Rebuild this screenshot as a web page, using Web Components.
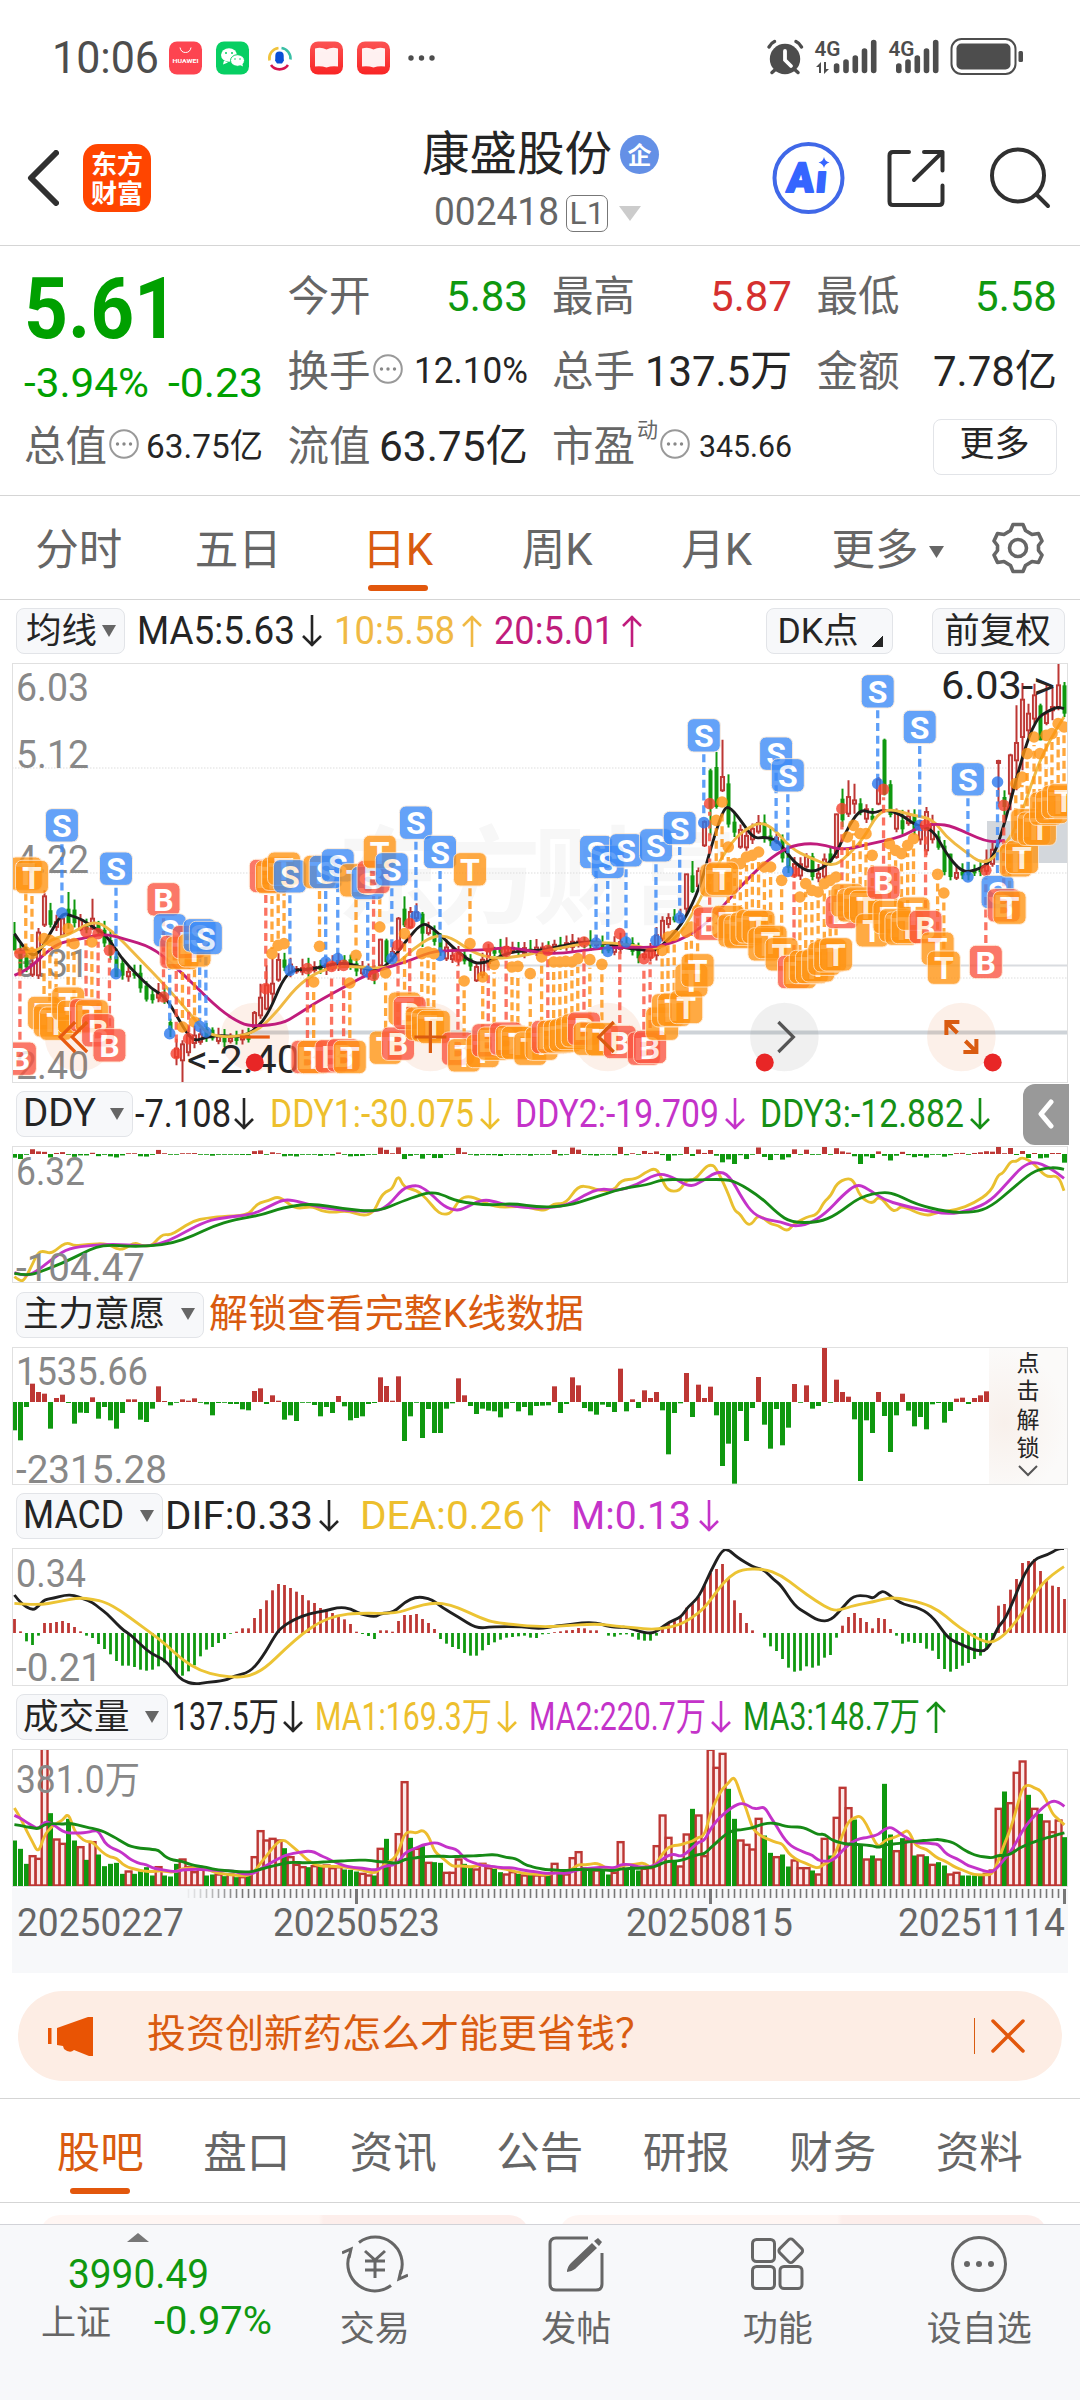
<!DOCTYPE html>
<html lang="zh-CN">
<head>
<meta charset="utf-8">
<title>康盛股份 002418</title>
<style>
  body {
    margin: 0;
    width: 1080px;
    height: 2400px;
    overflow: hidden;
    background: #fff;
    color: #252525;
    font-family: Roboto, "Noto Sans CJK SC", sans-serif;
    --up: #bd3734;
    --down: #0f980f;
    --brand: #d95b10;
    --gray: #666;
  }
</style>
</head>
<body>
<stock-app></stock-app>

<script>
const define = (name, css, html, ready) => {
    const tpl = document.createElement('template');
    tpl.innerHTML = `<style>*{box-sizing:border-box}:host{display:block;box-sizing:border-box}${css}</style>${html}`;
    customElements.define(name, class extends HTMLElement {
        connectedCallback() {
            if (this.shadowRoot) return;
            this.attachShadow({ mode: 'open' }).append(tpl.content.cloneNode(true));
            if (ready) ready.call(this, this.shadowRoot);
        }
    });
};

define('fit-text', `
    :host { display: inline-block; flex: none; white-space: nowrap; line-height: 1.2; }
    span { display: inline-block; transform-origin: 0 50%; }
`, `<span></span>`, function (root) {
    const span = root.querySelector('span');
    span.textContent = this.getAttribute('t');
    const w = Number(this.getAttribute('w'));
    this.style.width = w + 'px';
    span.style.transform = `scaleX(${w / span.getBoundingClientRect().width})`;
});

define('status-bar', `
    :host { height: 115px; padding: 36px 56px 0 52px; color: #4d4d4d; }
    .row { display: flex; align-items: center; height: 43px; }
    fit-text { font-size: 45px; margin-right: 10px; }
    svg { flex: none; }
    .right { margin-left: auto; }
`, `
    <div class="row">
        <fit-text t="10:06" w="107"></fit-text>
        <svg width="270" height="40" viewBox="169 37.5 270 40">
            <defs>
                <linearGradient id="r" x2="0" y2="1"><stop stop-color="#fb5252"/><stop offset="1" stop-color="#f92525"/></linearGradient>
            </defs>
            <rect x="169" y="41" width="33" height="33" rx="8" fill="#fd4450"/>
            <path d="M180 47q1 5 5.500 5t5.500-5" fill="none" stroke="#fff" stroke-width="1"/>
            <text x="172.500" y="62" font-size="6" font-weight="700" fill="#fff" textLength="26" lengthAdjust="spacingAndGlyphs">HUAWEI</text>
            <rect x="216" y="41" width="33" height="33" rx="8" fill="#07cf63"/>
            <ellipse cx="229" cy="54.500" rx="8" ry="6.800" fill="#fff"/><path d="M224 60l-1 4 5-2z" fill="#fff"/>
            <ellipse cx="237.500" cy="60" rx="7" ry="5.800" fill="#fff" stroke="#07cf63"/><path d="M239 64l4 2-1-4z" fill="#fff"/>
            <g fill="#07cf63"><circle cx="226" cy="52.500" r="1"/><circle cx="232" cy="52.500" r="1"/><circle cx="235" cy="58.500" r=".8"/><circle cx="240" cy="58.500" r=".8"/></g>
            <g fill="none" stroke-width="2.600">
                <path d="M269.500 60a10.500 10.500 0 0 1 9-12.500" stroke="#f0c33c"/>
                <path d="M281.500 47.500a10.500 10.500 0 0 1 9 11.500" stroke="#39bfa5"/>
                <path d="M271 64.500a10.500 10.500 0 0 0 17 0" stroke="#d5154f"/>
            </g>
            <path d="M279.500 51c6 0 3.500 6 4.500 9l-2 3h-5l-2-3c1-3-1.500-9 4.500-9z" fill="#0a4fd6"/>
            <g id="book">
                <rect x="310" y="41" width="33" height="33" rx="8" fill="url(#r)"/>
                <path d="M315 48q6-2 11.500 1q5.500-3 11.500-1v18q-6-1-11.500 1q-5.500-2-11.500-1z" fill="#fff" opacity=".93"/>
            </g>
            <use href="#book" x="47"/>
            <g fill="#4d4d4d"><circle cx="411" cy="57.500" r="2.700"/><circle cx="421.500" cy="57.500" r="2.700"/><circle cx="432" cy="57.500" r="2.700"/></g>
        </svg>
        <svg class="right" width="260" height="43" viewBox="764 36 260 43" fill="#4d4d4d">
            <circle cx="785" cy="59" r="15.200"/>
            <path d="M785 51v9l6 6" fill="none" stroke="#fff" stroke-width="3.800" stroke-linecap="round"/>
            <path d="M769 47q2-4 5.500-5.500M801.500 47q-2-4-5.500-5.500M776 69l-4 3.500M794 69l4 3.500" fill="none" stroke="#4d4d4d" stroke-width="3.500" stroke-linecap="round"/>
            <text x="814.500" y="56" font-size="21" font-weight="600" textLength="26" lengthAdjust="spacingAndGlyphs">4G</text>
            <path d="M836.600 66v4.500M846 62v8.500M855.300 58v12.500M864.500 51v19.500M873.700 42.500v28" stroke="#4d4d4d" stroke-width="5.600" stroke-linecap="round"/>
            <path d="M816 67l5-5v11h-2v-6zM829 69l-5 5v-12h2v7z"/>
            <text x="888.500" y="56" font-size="21" font-weight="600" textLength="26" lengthAdjust="spacingAndGlyphs">4G</text>
            <path d="M898.800 66v4.500M908 62v8.500M917.300 58v12.500M926.500 51v19.500M935.700 42.500v28" stroke="#4d4d4d" stroke-width="5.600" stroke-linecap="round"/>
            <rect x="951.500" y="39" width="64" height="35" rx="10" fill="none" stroke="#4d4d4d" stroke-width="2"/>
            <rect x="956.500" y="43.500" width="54" height="26" rx="5"/>
            <rect x="1018.500" y="51" width="4.500" height="11" rx="1.500"/>
        </svg>
    </div>
`);

define('app-header', `
    :host { height: 131px; display: flex; position: relative; border-bottom: 1.500px solid #d5d5d5; }
    .left { display: flex; align-items: center; padding: 0 0 4px 26px; gap: 24px; height: 130px; width: 422px; }
    .logo { width: 68px; height: 68px; border-radius: 15px; background: #ff4500; color: #fff; font: 700 26px/29px "Noto Sans CJK SC"; text-align: center; padding-top: 4px; }
    .mid { flex: 1; height: 130px; padding-top: 10px; }
    .name { display: flex; align-items: center; font-size: 47px; line-height: 58px; height: 58px; }
    .ent { width: 39px; height: 39px; border-radius: 50%; background: #6490e6; color: #fff; font: 700 24px/38px "Noto Sans CJK SC"; text-align: center; margin-left: 8px; }
    .code { display: flex; align-items: center; color: var(--gray); padding-left: 12px; height: 60px; font-size: 38px; }
    .lv { width: 42px; height: 37px; border: 1.500px solid #777; border-radius: 7px; font-size: 32px; line-height: 34px; text-align: center; margin: 0 11px 0 7px; }
    .right { display: flex; align-items: center; height: 130px; padding-bottom: 4px; width: 310px; }
`, `
    <div class="left">
        <svg width="33" height="56" viewBox="0 0 33 56"><path d="M30 3L5 28l25 25" fill="none" stroke="#303030" stroke-width="6" stroke-linejoin="round" stroke-linecap="round"/></svg>
        <div class="logo">东方<br>财富</div>
    </div>
    <div class="mid">
        <div class="name"><fit-text t="康盛股份" w="190"></fit-text><div class="ent">企</div></div>
        <div class="code"><fit-text t="002418" w="125"></fit-text><div class="lv">L1</div>
            <svg width="22" height="15"><path d="M0 0h22L11 15z" fill="#ccc"/></svg></div>
    </div>
    <div class="right">
        <svg width="310" height="76" viewBox="770 140 310 76" fill="none" stroke="#303030" stroke-width="4" stroke-linecap="round" stroke-linejoin="round">
            <circle cx="808.500" cy="178" r="34" stroke="#4068e8"/>
            <path d="M824 157q1 4.500 5.500 5.500q-4.500 1-5.500 5.500q-1-4.500-5.500-5.500q4.500-1 5.500-5.500z" fill="#3565ff" stroke="none"/>
            <text transform="translate(786 191.500) skewX(-5)" font-size="41" font-weight="900" fill="#3565ff" stroke="#3565ff" stroke-width="2"><tspan textLength="27" lengthAdjust="spacingAndGlyphs">A</tspan><tspan x="29" font-size="38">ı</tspan></text>
            <path d="M909 152h-16q-3.500 0-3.500 3.500v46q0 3.500 3.500 3.500h46q3.500 0 3.500-3.500v-16M924 152h18.500v18.500M942.500 152L914 180"/>
            <circle cx="1018" cy="175.500" r="26"/><path d="M1037 195l11 11"/>
        </svg>
    </div>
`);

define('info-dots', `:host{display:inline-block;flex:none;width:30px;height:30px}svg{display:block}`,
    `<svg width="30" height="30"><circle cx="15" cy="15" r="13.800" fill="none" stroke="#999" stroke-width="2"/><g fill="#888"><circle cx="8.500" cy="15" r="1.700"/><circle cx="15" cy="15" r="1.700"/><circle cx="21.500" cy="15" r="1.700"/></g></svg>`);

define('quote-cell', `
    :host { display: flex; align-items: center; height: 75px; }
    .label { font-size: 41.500px; color: var(--gray); white-space: nowrap; line-height: 50px; }
    fit-text { margin-left: auto; }
    slot { display: contents; }
`, `<span class="label"></span><slot></slot><fit-text></fit-text>`, function (root) {
    root.querySelector('.label').textContent = this.getAttribute('label');
    const fit = document.createElement('fit-text');
    fit.setAttribute('t', this.getAttribute('value'));
    fit.setAttribute('w', this.getAttribute('w'));
    fit.style.fontSize = (this.getAttribute('size') || 43) + 'px';
    fit.style.color = this.getAttribute('color') || '';
    root.querySelector('fit-text').replaceWith(fit);
});

define('quote-panel', `
    :host { height: 250px; border-bottom: 1.500px solid #d5d5d5; padding: 13px 24px 0 24px;
        display: grid; grid-template-columns: 239px 240px 240px 240px; grid-template-rows: 75px 75px 75px; column-gap: 24.500px; }
    .price { grid-row: span 2; color: #00a000; display: flex; flex-direction: column; }
    .big { font-size: 86px; font-weight: 700; height: 101px; line-height: 94px; margin-top: -2px; }
    .chg { display: flex; justify-content: space-between; font-size: 40px; height: 48px; line-height: 48px; margin-top: 2px; }
    .dyn { color: var(--gray); font-size: 21px; margin: -38px 0 0 2px; }
    info-dots { margin: -5px 0 0 2px; }
    .more { width: 124px; height: 56px; border: 1.500px solid #e2e4e8; border-radius: 8px; justify-self: end; align-self: center; font-size: 35px; line-height: 50px; text-align: center; }
`, `
    <div class="price">
        <div class="big"><fit-text t="5.61" w="154"></fit-text></div>
        <div class="chg"><fit-text t="-3.94%" w="125"></fit-text><fit-text t="-0.23" w="95"></fit-text></div>
    </div>
    <quote-cell label="今开" value="5.83" w="82" color="#0f980f"></quote-cell>
    <quote-cell label="最高" value="5.87" w="82" color="#d5302f"></quote-cell>
    <quote-cell label="最低" value="5.58" w="82" color="#0f980f"></quote-cell>
    <quote-cell label="换手" value="12.10%" w="114" size="36"><info-dots></info-dots></quote-cell>
    <quote-cell label="总手" value="137.5万" w="147"></quote-cell>
    <quote-cell label="金额" value="7.78亿" w="124"></quote-cell>
    <quote-cell label="总值" value="63.75亿" w="117" size="34"><info-dots></info-dots></quote-cell>
    <quote-cell label="流值" value="63.75亿" w="149"></quote-cell>
    <quote-cell label="市盈" value="345.66" w="93" size="31"><span class="dyn">动</span><info-dots></info-dots></quote-cell>
    <div class="more">更多</div>
`);

define('tab-item', `
    :host { display: flex; flex-direction: column; align-items: center; justify-content: center; position: relative; height: 100%; flex: none; color: var(--gray); font-size: 43.500px; white-space: nowrap; }
    :host([active]) { color: var(--brand); }
    :host([active])::after { content: ""; position: absolute; bottom: 8px; left: 50%; width: 60px; height: 6px; border-radius: 3px; margin-left: -30px; background: #e2570c; }
    span { margin-top: -3px; }
`, `<span><slot></slot></span>`);

define('period-tabs', `
    :host { display: flex; height: 104px; border-bottom: 1.500px solid #d5d5d5; align-items: center; margin-left: -1px; }
    tab-item { width: 159.500px; }
    .m { width: 182px; }
    .m svg { margin: 0 0 7px 10px; }
`, `
    <tab-item>分时</tab-item><tab-item>五日</tab-item><tab-item active>日K</tab-item><tab-item>周K</tab-item><tab-item>月K</tab-item>
    <tab-item class="m">更多<svg width="15" height="12"><path d="M0 0h15L7.500 12z" fill="#666"/></svg></tab-item>
    <svg width="54" height="54" viewBox="-27 -27 54 54" style="margin-left:12px" fill="none" stroke="#666" stroke-width="3.600" stroke-linejoin="round">
        <path d="M-5-23.500H5L7.500-17.500 14-13.500 20.500-14.500 24-7 20.500-2.500V2.500L24 7 20.500 14.500 14 13.500 7.500 17.500 5 23.500H-5L-7.500 17.500-14 13.500-20.500 14.500-24 7-20.500 2.500V-2.500L-24-7-20.500-14.500-14-13.500-7.500-17.500z"/><circle r="8.500"/>
    </svg>
`);

define('ind-button', `
    :host { display: flex; align-items: center; height: 46px; flex: none; background: #f7f8fa; border: 1.500px solid #e2e4e8; border-radius: 8px; padding: 0 8px 1px 6px; font-size: 35.500px; line-height: 42px; white-space: nowrap; }
    i { margin-left: auto; border: 7.500px solid transparent; border-top: 12px solid #666; border-bottom: 0; }
    :host([plain]) i { display: none; }
    :host([plain]) { justify-content: center; }
    :host([corner]) i { display: block; border: 0; background: linear-gradient(135deg, transparent 50%, #252525 51%); width: 12px; height: 12px; align-self: flex-end; margin: 0 -3px 5px 12px; }
`, `<slot></slot><i></i>`);

define('ind-value', `
    :host { display: flex; align-items: center; flex: none; font-size: 38.500px; }
    svg { flex: none; }
`, `<svg width="20" height="34" viewBox="0 0 20 34" fill="none" stroke="currentColor" stroke-width="2.600"><path/></svg>`, function (root) {
    const fit = document.createElement('fit-text');
    fit.setAttribute('t', this.getAttribute('t'));
    fit.setAttribute('w', this.getAttribute('w'));
    root.prepend(fit);
    root.querySelector('path').setAttribute('d', this.hasAttribute('up') ? 'M10 33V2M1 12l9-9 9 9' : 'M10 1v31M1 22l9 9 9-9');
    root.querySelector('svg').style.marginLeft = (this.getAttribute('gap') || 7) + 'px';
});

define('ind-row', `:host { display: flex; align-items: center; height: 63px; padding: 0 0 0 16px; }`, `<slot></slot>`);

/* ---- chart data ---- */
/* lines are traced on a grid 2.904 units per pixel across and 3 down, in two halves */
const HALF = 1568;
const trace = (left, right) => {
    const read = (s, dx) => s.split(' ').map(p => p.split(',').map(Number)).map(([x, y]) => [x + dx, y]);
    return [...read(left, 0), ...read(right, HALF)];
};
const px = x => (x - 35) / 2.904;
const barX = i => 2.500 + 6 * i;

const force = [-85,-115,-15,55,30,25,-80,12,22,-3,-65,-32,-33,14,-50,-15,-55,-80,-33,8,8,-53,-60,-20,47,3,-10,-2,8,4,11,-2,-7,-40,-3,-2,-6,-6,-22,-25,33,41,-6,20,4,-53,-40,-57,-1,-2,-9,-43,-15,-33,18,-13,-55,-48,-43,-6,-3,74,48,4,77,-117,-43,-2,-108,-21,-93,-93,-20,-4,71,20,-12,-36,-20,-26,-28,-46,-20,-3,-28,-15,-40,-12,
    -11,-10,47,-33,-6,74,50,-18,-28,-38,-8,-15,-30,100,-28,8,-18,35,12,30,-25,-157,-33,-4,87,-45,52,12,46,-40,-192,-125,-245,-27,-117,-18,75,-68,-140,-21,-130,-77,54,-2,50,-20,-12,163,-2,67,30,16,-52,-237,-55,-93,30,-42,-150,-40,25,-26,-73,-45,-82,-7,-3,-62,-27,10,13,-6,12,20,32];
const ddy = [...force.map(v => v > 0 ? Math.min(21, v * .26) : Math.max(-30, v * .13)), 7, 24, 2, 18, -3, 9, -12, 3, -13, -11, 3, 3, -26];
const macd = [42,5,-25,-36,-8,30,30,33,36,30,18,5,-8,-15,-33,-48,-64,-84,-98,-98,-102,-110,-113,-110,-100,-88,-98,-125,-128,-115,-97,-70,-50,-42,-30,-18,-2,4,14,14,45,72,98,128,147,144,135,124,114,98,90,75,66,60,50,41,27,4,-3,-9,-18,8,8,4,36,54,54,57,42,30,12,-18,-32,-42,-48,-60,-68,-68,-52,-36,-28,-20,-14,-12,-10,-8,-14,-15,
    -4,-2,2,5,8,9,15,14,8,8,0,-8,-11,-5,-4,-11,-20,-23,-23,-8,13,30,36,48,76,88,108,145,180,192,207,162,98,60,30,8,0,-14,-40,-54,-78,-104,-116,-113,-100,-104,-98,-74,-66,-14,22,48,60,45,33,14,45,42,12,-8,-32,-26,-30,-30,-47,-53,-78,-108,-116,-108,-98,-90,-78,-68,-50,-20,82,87,130,162,210,216,222,186,162,142,138,102];
/* positive = rising day (hollow red), negative = falling day (solid green) */
const volume = [-135,-110,-65,88,80,410,-217,138,125,-200,-135,115,-77,130,-93,-58,-65,-68,-35,42,-35,-43,-55,-30,55,-30,-27,-65,78,55,40,48,-30,-33,33,-28,33,-25,25,-33,85,163,135,140,135,-112,85,62,55,-55,58,-58,60,52,55,-48,-47,-42,35,30,-30,110,-140,62,154,310,-143,110,-118,68,-70,-68,38,38,78,-65,-58,48,65,52,-50,-40,33,40,-35,30,-33,30,
    30,-33,65,-35,33,82,100,-55,-50,45,-48,-33,38,130,-52,-60,-45,50,52,118,210,143,-75,57,153,-230,210,88,407,353,395,-290,-200,135,122,108,200,-150,-98,85,-93,-57,75,52,52,-45,33,140,-90,203,293,232,-198,-120,78,-90,78,-305,-153,103,-142,135,-90,90,-88,62,-70,-60,33,38,-30,-30,-30,-30,35,45,230,-282,247,338,372,-272,230,-215,192,160,195,-145];

const DIF = trace('42,345 60,370 95,392 112,378 130,358 155,355 190,345 215,346 240,355 270,368 290,385 310,400 340,432 360,452 380,465 410,495 440,522 480,540 510,580 530,602 565,613 600,607 655,602 680,588 725,577 760,535 800,465 815,445 850,420 900,400 945,393 985,381 1020,386 1040,400 1090,412 1105,400 1143,398 1175,366 1210,350 1245,355 1265,366 1285,383 1330,410 1385,446 1430,440 1520,440',
    '0,447 50,437 90,434 120,428 165,428 190,437 220,443 255,441 290,455 325,461 345,450 375,426 410,412 430,380 462,352 495,275 530,208 550,210 570,230 620,262 650,268 680,300 700,315 740,378 770,397 810,423 845,422 880,382 910,347 950,347 968,356 985,338 1000,333 1020,350 1055,374 1105,384 1145,415 1185,475 1220,492 1265,512 1300,513 1330,440 1350,420 1380,350 1405,285 1435,237 1475,224 1505,206 1522,206');
const DEA = trace('42,370 110,376 170,365 230,353 270,358 305,366 350,392 400,430 440,460 480,492 530,540 580,572 640,588 690,592 725,588 770,565 830,505 880,460 930,425 980,406 1040,399 1150,401 1200,382 1260,367 1310,375 1350,392 1410,420 1450,430',
    '0,441 60,438 165,431 220,438 290,445 335,449 400,437 440,415 480,382 520,325 550,290 585,268 650,266 700,285 750,325 800,362 850,392 880,388 910,377 970,365 1010,354 1040,354 1110,368 1160,392 1200,428 1240,458 1290,485 1315,487 1350,465 1390,415 1450,320 1490,282 1522,260');
const DDY1 = trace('42,590 60,605 72,598 90,562 110,518 125,513 145,520 160,513 180,495 198,488 215,498 255,493 310,490 340,508 360,507 392,487 410,497 440,498 460,475 475,463 495,465 520,450 560,423 600,414 640,410 720,406 740,380 755,368 780,362 805,350 825,360 860,388 905,378 930,392 965,398 1010,392 1055,408 1085,398 1105,352 1120,335 1140,327 1156,283 1173,323 1210,330 1240,357 1265,390 1285,404 1310,400 1335,357 1360,348 1390,358 1440,383 1520,378',
    '0,390 20,390 40,370 75,372 110,318 145,320 165,330 215,333 235,300 280,297 305,278 338,262 355,300 372,333 405,334 425,300 450,300 480,262 495,254 510,260 545,335 565,393 580,400 600,432 615,434 635,402 670,433 690,435 718,455 735,435 775,410 805,405 825,365 845,348 862,310 893,294 912,302 930,350 965,374 985,345 1020,390 1035,393 1050,376 1120,410 1160,395 1210,390 1260,370 1310,335 1330,285 1345,280 1367,243 1385,245 1400,230 1435,250 1470,293 1505,285 1522,332');
const DDY2 = trace('42,578 75,590 110,572 160,530 200,505 270,495 340,493 400,497 440,498 490,483 540,455 600,423 650,413 735,403 780,380 820,360 850,360 900,375 960,388 1090,397 1130,375 1170,325 1200,317 1220,318 1250,340 1290,380 1325,392 1350,385 1400,358 1440,365 1480,378',
    '0,386 80,376 130,345 175,325 225,333 280,315 340,280 380,288 435,322 470,305 515,273 550,285 590,360 620,402 660,420 700,425 735,440 780,432 830,400 880,345 920,312 950,325 1000,360 1050,375 1110,390 1185,403 1250,392 1310,362 1360,305 1400,260 1435,244 1480,262 1522,295');
const DDY3 = trace('42,580 85,588 130,570 180,550 240,520 280,500 320,495 375,499 440,498 500,490 560,468 620,438 680,419 760,405 820,383 905,370 1000,387 1095,396 1170,363 1220,345 1250,337 1280,342 1330,365 1420,376 1490,370',
    '0,382 80,378 150,355 240,325 310,315 360,297 440,301 530,297 570,305 640,350 690,400 730,428 810,427 860,405 930,350 1000,335 1040,345 1090,372 1180,396 1260,398 1310,380 1370,328 1430,275 1470,264 1500,263 1522,268');
const MA5 = trace('42,1030 75,1082 105,1100 140,1040 180,968 205,975 240,988 270,1010 310,1035 350,1100 400,1155 440,1195 480,1220 510,1270 540,1325 565,1353 600,1340 640,1335 700,1340 740,1320 780,1270 820,1170 850,1138 900,1138 990,1115 1050,1130 1090,1145 1130,1120 1180,1050 1225,998 1250,1008 1290,1045 1330,1085 1370,1115 1400,1120 1440,1105 1480,1085',
    '0,1080 60,1068 120,1055 160,1055 200,1062 260,1075 310,1080 340,1080 380,1040 420,990 465,890 500,760 530,665 547,645 580,685 620,745 650,740 690,748 740,820 790,850 850,815 890,720 930,655 965,670 1000,657 1050,672 1090,705 1140,715 1180,790 1220,840 1250,845 1310,820 1350,700 1400,500 1440,385 1480,360 1505,350 1522,355');
const MA10 = trace('42,1085 100,1090 150,1045 200,1035 270,990 320,1015 400,1100 480,1185 560,1280 600,1330 660,1342 740,1328 800,1270 860,1190 920,1145 990,1125 1100,1135 1150,1125 1200,1075 1260,1035 1310,1040 1370,1085 1430,1105 1500,1100',
    '0,1085 100,1065 160,1055 260,1062 340,1080 400,1040 450,960 500,850 560,750 600,715 640,695 680,715 730,775 780,800 850,830 890,800 940,745 980,670 1020,655 1080,675 1140,685 1180,740 1230,780 1290,825 1340,780 1390,700 1440,540 1480,450 1522,380');
const MA20 = trace('42,1155 80,1140 140,1080 180,1055 240,1045 300,1030 360,1045 440,1070 500,1120 560,1180 640,1260 700,1300 740,1308 820,1300 860,1275 920,1235 1000,1190 1080,1145 1180,1115 1250,1085 1300,1080 1400,1080 1480,1070',
    '0,1088 60,1090 160,1075 240,1070 340,1072 430,1040 500,985 580,890 660,810 720,770 780,758 830,765 880,780 960,760 1050,740 1100,710 1150,700 1200,708 1300,757 1350,750');
const CLOSE = trace('42,1040 60,1100 95,1150 112,1030 130,960 147,1000 170,1005 180,975 198,960 215,990 235,1015 267,1000 285,1020 318,1080 337,1120 355,1150 390,1150 407,1185 425,1225 442,1215 475,1215 493,1310 512,1390 530,1380 548,1340 565,1350 600,1320 620,1345 660,1350 700,1335 720,1350 740,1290 755,1240 772,1200 790,1170 808,1110 840,1140 900,1135 960,1125 1000,1110 1040,1140 1090,1160 1105,1090 1140,1090 1156,1010 1175,960 1190,980 1208,965 1230,1020 1245,1025 1280,1075 1300,1105 1330,1095 1365,1120 1385,1150 1402,1110 1420,1085 1470,1075 1520,1080',
    '0,1075 60,1065 120,1055 165,1060 200,1080 230,1060 250,1060 290,1100 320,1090 335,1050 355,995 390,980 408,985 425,900 445,880 460,850 478,730 495,680 512,590 530,580 548,700 565,720 580,770 600,740 635,700 650,740 690,750 705,800 740,850 775,800 790,855 810,855 830,800 850,790 862,730 877,650 895,640 912,640 930,660 950,680 965,690 983,600 1000,580 1018,670 1035,710 1070,680 1085,710 1105,740 1120,700 1140,740 1158,770 1175,840 1190,860 1210,850 1245,845 1290,830 1315,780 1331,560 1348,640 1365,600 1383,500 1400,400 1418,400 1435,340 1452,400 1470,380 1487,360 1505,300 1522,320');

/* tall days: index -> [high, body top, body bottom, low, rising] */
const CANDLES = {
    0: [995, 1035, 1080, 1080, 0], 1: [1060, 1080, 1140, 1145, 0], 5: [900, 918, 1003, 1010, 1], 8: [970, 985, 1035, 1040, 1], 9: [905, 955, 1000, 1015, 0],
    13: [925, 985, 1015, 1020, 1], 17: [1075, 1098, 1160, 1160, 0], 26: [1285, 1295, 1318, 1340, 0], 27: [1345, 1375, 1400, 1425, 1], 28: [1350, 1362, 1410, 1475, 1],
    40: [1262, 1268, 1310, 1320, 1], 41: [1180, 1222, 1275, 1285, 1], 42: [1125, 1185, 1255, 1260, 1], 43: [1105, 1180, 1210, 1240, 1], 61: [1045, 1048, 1125, 1130, 1], 62: [1045, 1050, 1115, 1120, 0],
    64: [980, 985, 1075, 1090, 1], 65: [918, 955, 1005, 1010, 0], 66: [950, 965, 1010, 1015, 1], 68: [965, 970, 1030, 1070, 0], 77: [1118, 1130, 1170, 1175, 1],
    112: [850, 852, 955, 975, 1], 113: [812, 855, 905, 908, 0], 115: [690, 695, 765, 770, 1], 116: [535, 540, 655, 735, 0], 117: [485, 530, 650, 655, 0], 118: [448, 560, 600, 605, 1],
    137: [670, 672, 800, 805, 1], 138: [595, 625, 690, 710, 0], 139: [570, 620, 670, 680, 1], 140: [580, 630, 640, 670, 1], 144: [560, 568, 640, 645, 1], 145: [445, 448, 612, 615, 0], 152: [650, 665, 780, 795, 1], 156: [790, 790, 860, 870, 0],
    164: [508, 512, 518, 640, 1], 165: [600, 620, 650, 690, 0], 166: [490, 495, 610, 660, 1], 167: [345, 458, 510, 600, 1], 168: [278, 328, 440, 540, 1], 169: [340, 370, 420, 440, 1], 170: [280, 315, 385, 400, 1], 171: [340, 345, 450, 450, 0], 172: [280, 370, 398, 405, 1], 173: [290, 350, 360, 390, 1], 174: [218, 285, 350, 360, 1], 175: [275, 285, 370, 380, 0]
};

/* letter, x, tag centre, dot y */
const TAGS_L = `T,75,850,1085 T,93,860,1090 S,180,705,968 S,337,835,1150 B,475,927,1220 S,493,1020,1330 B,512,1085,1390 T,530,1088,1310 B,548,1055,1345 T,565,1080,1295 S,580,1035,1308 S,598,1043,1325
B,772,857,1195 T,790,860,1090 T,808,850,1065 T,825,835,1060 S,842,858,1140 T,928,845,1068 S,946,845,1115 S,981,825,1105 T,1034,870,1095 S,1068,878,1145 B,1085,860,1155 T,1103,785,1010 S,1138,837,1105 S,1208,697,978 S,1278,785,1095 T,1365,837,1060
B,58,1405,1090 T,128,1268,1045 T,145,1290,1050 T,163,1300,1060 T,198,1240,1015 T,215,1280,1060 B,250,1275,1025 T,267,1278,1055 B,285,1320,1030 B,318,1365,1080
B,893,1400,1135 T,911,1400,1175 B,963,1398,1128 B,998,1395,1125 T,1016,1400,1178 T,1120,1372,1148 T,1175,1255,1030 B,1156,1360,1065 B,1190,1268,1000 T,1225,1300,1090 T,1243,1305,1085 T,1260,1310,1090 B,1330,1375,1100 T,1348,1395,1172 T,1402,1382,1160 B,1418,1350,1070 T,1435,1360,1122 B,1470,1345,1083 T,1487,1355,1130 T,1504,1358,1128 T,1540,1375,1150`;
const TAGS_R = `T,5,1360,1100 B,23,1340,1080 T,40,1340,1115 T,58,1338,1115 T,75,1335,1113 T,93,1328,1115 T,110,1320,1105 B,128,1315,1055 T,145,1345,1108 T,180,1347,1122 B,232,1355,1030 B,302,1375,1105 B,320,1370,1090 T,355,1300,1080 T,372,1260,1040 T,390,1258,1035 T,425,1250,1025 T,440,1170,1010 T,458,1140,960
S,163,785,1058 S,197,815,1083 S,250,780,1055 S,337,765,1050 S,406,713,983 S,476,435,697 B,493,1000,640 T,512,870,690 T,529,865,635 T,547,995,770 T,565,1020,820 T,582,1025,820 T,600,1015,800 T,617,1008,795 T,635,1010,785 T,652,1062,830 T,670,1055,830 T,702,1092,870 B,738,1145,845 T,755,1145,920 T,772,1130,880 T,790,1130,900 T,808,1125,905 T,826,1105,880 T,843,1095,870 T,860,1092,860
B,877,965,655 T,893,930,740 T,911,945,705 T,930,940,730 T,947,950,730 T,965,1020,795 S,686,490,765 S,720,555,843 S,981,303,580 B,998,877,597 T,1015,980,760 T,1033,1005,780 T,1050,1015,790 T,1068,1010,765 T,1085,970,745 S,1103,410,705 B,1120,1010,705 T,1155,1075,852 T,1173,1132,908 S,1243,567,860
S,1329,905,575 B,1295,1115,840 B,1347,945,645 T,1364,952,770 T,1382,810,580 T,1400,800,560 T,1415,705,490 T,1435,715,440 T,1452,715,490 T,1470,655,435 T,1487,650,430 T,1505,635,400 T,1522,630,410`;
const tags = [[TAGS_L, 0], [TAGS_R, HALF]].flatMap(([s, dx]) => s.trim().split(/\s+/).map(p => {
    const [k, x, y, d] = p.split(',');
    return { k, x: px(+x + dx), y: (y - 218) / 3, d: (d - 218) / 3 };
}));

const line = (pts, top, color, w = 2.900) => {
    const p = pts.map(([x, y]) => [px(x), (y - top) / 3]);
    let d = `M${p[0]}`;
    for (let i = 1; i < p.length - 1; i++) d += `Q${p[i]} ${(p[i][0] + p[i + 1][0]) / 2},${(p[i][1] + p[i + 1][1]) / 2}`;
    return `<path d="${d}L${p[p.length - 1]}" fill="none" stroke="${color}" stroke-width="${w}" stroke-linejoin="round"/>`;
};
const bars = (data, zero, w) => data.map((v, i) => {
    const h = Math.max(Math.abs(v) / 3, .8);
    return v ? `<rect x="${barX(i) - w / 2}" y="${v > 0 ? zero - h : zero}" width="${w}" height="${h}" fill="${v > 0 ? '#bd3734' : '#0f980f'}"/>` : '';
}).join('');
const label = (t, y, w, size = 38) => `<text x="4" y="${y}" font-size="${size}" fill="#888" textLength="${w}" lengthAdjust="spacingAndGlyphs">${t}</text>`;
const valueAt = (pts, x) => {
    const i = Math.max(1, pts.findIndex(p => p[0] >= x));
    const [a, b] = [pts[i - 1], pts[i]];
    return a[1] + (b[1] - a[1]) * Math.max(0, Math.min(1, (x - a[0]) / (b[0] - a[0])));
};

const drawCandles = () => {
    let out = '';
    for (let i = 0; i < 176; i++) {
        const gx = barX(i) * 2.904 + 35;
        let c = CANDLES[i];
        if (!c) {
            const y = valueAt(CLOSE, gx), prev = valueAt(CLOSE, gx - 17.400);
            const wob = 6 + (i * 37 % 11);
            const top = Math.min(y, prev) - wob / 3, bot = Math.max(y, prev) + wob / 2;
            c = [top - wob - (i * 53 % 19), top, bot, bot + wob, volume[i] > 0];
        }
        const [hi, top, bot, lo, up] = c.map((v, k) => k < 4 ? (v - 218) / 3 : v);
        const x = barX(i), color = up ? '#bd3734' : '#0f980f';
        out += up
            ? `<path d="M${x} ${hi}V${top}M${x} ${bot}V${lo}" stroke="${color}" stroke-width="2"/><rect x="${x - 1.600}" y="${top}" width="3.200" height="${Math.max(2, bot - top)}" fill="#f7dede" stroke="${color}" stroke-width="1.900"/>`
            : `<path d="M${x} ${hi}V${lo}" stroke="${color}" stroke-width="2"/><rect x="${x - 2}" y="${top}" width="4" height="${Math.max(2, bot - top)}" fill="${color}"/>`;
    }
    return out;
};
const TAG_COLOR = { S: '#3b8af7', B: '#fb5540', T: '#ff9412' };
const DOT_COLOR = { S: '#2a79ee', B: '#f5412f', T: '#ff9412' };
const drawTags = () => {
    const stems = tags.map(t => t.d > t.y
        ? `<path d="M${t.x} ${t.y + 19}V${t.d - 5}" stroke="${TAG_COLOR[t.k]}"/>`
        : `<path d="M${t.x} ${t.y - 19}V${t.d + 8}" stroke="${TAG_COLOR[t.k]}"/>`).join('');
    const dots = tags.map(t => `<circle cx="${t.x}" cy="${t.d}" r="5.800" fill="${DOT_COLOR[t.k]}"/>`).join('');
    const boxes = tags.map(t => `<g opacity=".79"><rect x="${t.x - 16.500}" y="${t.y - 16.700}" width="33" height="33.400" rx="6.500" fill="${TAG_COLOR[t.k]}" stroke="#ffe9d2" stroke-width="1"/><text x="${t.x}" y="${t.y + 11.500}" font-size="32" font-weight="700" fill="#fff" text-anchor="middle">${t.k}</text></g>`).join('');
    return `<g stroke-width="3.300" stroke-dasharray="8 4.700" opacity=".82">${stems}</g><g opacity=".8">${dots}</g>${boxes}`;
};
const tool = (gx, color, glyph) => {
    const x = px(gx);
    return [`<circle cx="${x}" cy="374" r="34.300" fill="${color}" opacity=".09"/>`, `<g transform="translate(${x} 374)" fill="none" stroke="${color}" stroke-width="3.200">${glyph}</g>`];
};
const tools = [
    tool(230, '#e85a10', '<path d="M-4-15L-19 0-4 15M8-15L-7 0 8 15"/>'),
    tool(740, '#e85a10', '<path d="M-15 0h30"/>'),
    tool(1250, '#d95b10', '<path d="M-16 0h32M0-16v32"/>'),
    tool(197 + HALF, '#d95b10', '<path d="M6-15L-9 0 6 15"/>'),
    tool(710 + HALF, '#555', '<path d="M-6-15L9 0-6 15"/>'),
    tool(1224 + HALF, '#d95b10', '<path d="M-4-4L-15-15M-15-2v-13h13M4 4L15 15M15 2v13H2" stroke-width="4"/>')
];

const CHARTS = {
    price: { h: 420, draw: () => `
        <text x="325" y="252" font-size="106" font-weight="700" fill="#f7f7f7" textLength="400">东方财富</text>
        <g stroke="#ddd" stroke-dasharray="1.500 1.500"><path d="M0 105H1056M0 210H1056M0 315H1056"/></g>
        <path d="M470 302.500H1056" stroke="#d9dce0" stroke-width="2"/><path d="M236 369.500H1056" stroke="#ced3d8" stroke-width="4"/>
        <rect x="975" y="158" width="81" height="42" fill="#c8cdd3" opacity=".8"/>
        ${label('6.03', 38, 73)}${label('5.12', 105, 73)}${label('4.22', 210, 73)}${label('3.31', 314, 73)}${label('2.40', 416, 73)}
        ${tools.map(t => t[0]).join('')}
        ${drawCandles()}
        ${line(MA5, 218, '#1d1d1d')}${line(MA10, 218, '#f0b944')}${line(MA20, 218, '#c01c7c')}
        <text x="175" y="410" font-size="38" fill="#252525" textLength="113" lengthAdjust="spacingAndGlyphs">&lt;-2.40</text>
        <text x="929" y="36" font-size="38" fill="#252525" textLength="114" lengthAdjust="spacingAndGlyphs">6.03-&gt;</text>
        ${drawTags()}
        ${tools.map(t => t[1]).join('')}
        ${[740, 653 + HALF, 1315 + HALF].map(x => `<circle cx="${px(x)}" cy="399.500" r="9" fill="#e82626"/>`).join('')}` },
    ddy: { h: 137.5, draw: () => bars(ddy, 8, 5) + line(DDY1, 198, '#e9c030') + line(DDY2, 198, '#c433c9') + line(DDY3, 198, '#168a16') + label('6.32', 39, 69) + label('-104.47', 135, 129) },
    force: { h: 138, draw: () => bars(force, 55, 5) + label('1535.66', 38, 132) + label('-2315.28', 136, 151) },
    macd: { h: 138, draw: () => bars(macd, 85, 2.800) + line(DIF, 204, '#202020') + line(DEA, 204, '#ecc434') + label('0.34', 39, 70) + label('-0.21', 133, 86) },
    vol: { h: 138.5, draw: () => {
        const lead = [...Array(10).fill(150), 190, 190, 190, 190, 190, 180, 256, 256, 256, 256];
        const all = [...lead, ...volume.map(Math.abs)];
        const ma = n => volume.map((_, i) => [42 + 17.424 * i, 1215 - all.slice(i + 21 - n, i + 21).reduce((a, b) => a + b, 0) / n]);
        const body = volume.map((v, i) => {
            const h = Math.abs(v) / 3, x = barX(i);
            return v > 0
                ? `<rect x="${x - 2.800}" y="${136.500 - h}" width="5.800" height="${h}" fill="#fbe9e9" stroke="#bd3734" stroke-width="2.400"/>`
                : `<rect x="${x - 2.500}" y="${136.500 - h}" width="5" height="${h + 1}" fill="#0f980f"/>`;
        }).join('');
        return body + line(ma(5), 806, '#edbd2f') + line(ma(10), 806, '#c433c9') + line(ma(20), 806, '#168a16') + label('381.0万', 44, 124);
    } }
};

define('k-chart', `:host { margin: 0 12px; border: 1.500px solid #e0e0e0; position: relative; overflow: hidden; } svg { display: block; margin: -1px; }`,
    `<svg width="1056"></svg><slot></slot>`, function (root) {
        const { h, draw } = CHARTS[this.getAttribute('kind')];
        this.style.height = h + 'px';
        const svg = root.querySelector('svg');
        svg.setAttribute('height', h);
        svg.innerHTML = draw();
    });

define('unlock-cover', `
    :host { position: absolute; right: 0; top: 0; bottom: 0; width: 78px; padding-top: 2px; font-size: 23px; line-height: 28.600px; text-align: center; background: radial-gradient(ellipse at 20% 55%, #f8f0eb, #fbfaf9 70%); }
    svg { display: block; margin: 1px auto 0; }
`, `点<br>击<br>解<br>锁<svg width="20" height="12" fill="none" stroke="#555" stroke-width="2"><path d="M1 1l9 9 9-9"/></svg>`);

define('date-axis', `
    :host { margin: 1px 12px 0; height: 85px; background: #f7f8fa; }
    svg { display: block; margin-bottom: -5px; }
    .dates { display: flex; justify-content: space-between; padding: 0 3px 0 5px; font-size: 38px; line-height: 46px; color: var(--gray); }
    .dates fit-text:nth-child(2) { margin-left: -16px; }
    .dates fit-text:nth-child(3) { margin-left: 82px; }
`, `<svg width="1056" height="18"></svg>
    <div class="dates"><fit-text t="20250227" w="167"></fit-text><fit-text t="20250523" w="167"></fit-text><fit-text t="20250815" w="167"></fit-text><fit-text t="20251114" w="167"></fit-text></div>`,
function (root) {
    let s = '';
    for (let i = 29; i < 176; i++) {
        const big = [57, 116, 175].includes(i);
        s += `<rect x="${barX(i) - (big ? 1.500 : .8)}" y="1" width="${big ? 3 : 1.600}" height="${big ? 15 : 9}" fill="#777" opacity="${Math.min(1, (i - 28) / 10)}"/>`;
    }
    root.querySelector('svg').innerHTML = s;
});

define('promo-banner', `
    :host { display: flex; align-items: center; margin: 18px 18px 17px; height: 90px; border-radius: 45px; background: #fdede4; color: var(--brand); padding: 0 37px 0 29px; font-size: 39px; }
    fit-text { margin: -4px auto 0 53px; }
    i { width: 1.500px; height: 36px; background: var(--brand); margin-right: 16px; }
`, `
    <svg width="47" height="42" viewBox="47 2014 47 42" fill="#e95404"><path d="M48 2027h3.500v16H48zM57 2027l31-11h5v39h-4l-15-6q-4 4-10-1l-1-3-6-1z"/></svg>
    <fit-text t="投资创新药怎么才能更省钱？" w="507"></fit-text><i></i>
    <svg width="34" height="34" fill="none" stroke="#e2570c" stroke-width="3.500" stroke-linecap="round"><path d="M2 2l30 30M32 2L2 32"/></svg>
`);

define('section-tabs', `
    :host { display: flex; height: 105px; border-top: 1.500px solid #d5d5d5; border-bottom: 1.500px solid #d5d5d5; padding-left: 27px; }
    tab-item { width: 146.500px; }
`, ['股吧', '盘口', '资讯', '公告', '研报', '财务', '资料'].map((t, i) => `<tab-item ${i ? '' : 'active'}>${t}</tab-item>`).join(''));

define('card-peek', `
    :host { display: flex; gap: 30px; height: 21px; padding: 12px 33px 0 40px; overflow: hidden; }
    div { flex: 1; height: 40px; border-radius: 24px; background: linear-gradient(90deg, #fff6f3 57%, #fdeeeb 58%); }
`, `<div></div><div></div>`);

define('nav-item', `
    :host { flex: 1; display: flex; flex-direction: column; align-items: center; padding-top: 8px; color: var(--gray); font-size: 35px; line-height: 46px; }
    div { margin-top: 12px; }
`, `<svg width="66" height="62" viewBox="-33 -31 66 62" fill="none" stroke="#666" stroke-width="3"></svg><div><slot></slot></div>`, function (root) {
    root.querySelector('svg').innerHTML = {
        trade: '<path d="M-16-21.500A27 27 0 0 1 25.500 9.500M16 21.500A27 27 0 0 1-25.500-9.500M-33-11l9-4-2 9M33 11l-9 4 2-9M-10-13L0-4 10-13M-10-3h20M-10 6h20M0-4v18"/>',
        post: '<path d="M12-26h-32q-6 0-6 6v40q0 6 6 6h40q6 0 6-6v-31"/><path d="M-9 8q0-5 4-9L16-21l5 5L-1 5q-4 3-8 3zM18-23l4-3 4 4-3 4z" fill="#666" stroke="none"/>',
        grid: '<rect x="-25.500" y="-24.500" width="22" height="22" rx="4"/><rect x="-25.500" y="2.500" width="22" height="22" rx="4"/><rect x="2" y="2.500" width="22" height="22" rx="4"/><rect x="3.500" y="-22.500" width="18.500" height="18.500" rx="3" transform="rotate(45 12.750 -13.250)"/>',
        dots: '<circle r="26.500"/><g fill="#666" stroke="none"><circle cx="-12" r="3"/><circle r="3"/><circle cx="12" r="3"/></g>'
    }[this.getAttribute('icon')];
});

define('bottom-nav', `
    :host { display: flex; height: 176px; background: #f7f8fa; border-top: 1.500px solid #d2d3d8; }
    .index { width: 274px; padding: 8px 0 0; color: #0f980f; }
    .index > svg { display: block; margin: 0 0 5px 127px; }
    .val { font-size: 40px; height: 50px; padding-left: 68px; line-height: 56px; }
    .sub { display: flex; align-items: center; font-size: 38px; padding-left: 41px; height: 50px; gap: 43px; }
    .sub span { color: var(--gray); font-size: 35px; margin-top: -5px; }
`, `
    <div class="index">
        <svg width="22" height="9"><path d="M0 9h22L11 0z" fill="#777"/></svg>
        <div class="val"><fit-text t="3990.49" w="141"></fit-text></div>
        <div class="sub"><span>上证</span><fit-text t="-0.97%" w="118"></fit-text></div>
    </div>
    <nav-item icon="trade">交易</nav-item><nav-item icon="post">发帖</nav-item><nav-item icon="grid">功能</nav-item><nav-item icon="dots">设自选</nav-item>
`);

define('stock-app', `
    :host { width: 1080px; height: 2400px; overflow: hidden; }
    .first { height: 62.500px; }
    .wide { height: 63.500px; }
    .k { color: #252525; } .y { color: #edbf2e; } .o { color: #f0b944; } .p { color: #c01c7c; } .m { color: #c433c9; } .g { color: #168f16; }
    .hint { color: var(--brand); font-size: 39px; margin-left: 5px; }
    .latin { font-size: 38px; }
    .fold { margin-left: auto; width: 46px; height: 61px; border-radius: 12px 0 0 12px; background: #999; margin-right: 11px; display: grid; place-items: center; }
`, `
    <status-bar></status-bar>
    <app-header></app-header>
    <quote-panel></quote-panel>
    <period-tabs></period-tabs>
    <ind-row class="first">
        <ind-button style="width:109px;padding-left:9px">均线</ind-button>
        <ind-value class="k" t="MA5:5.63" w="158" style="margin-left:12px"></ind-value>
        <ind-value class="o" up t="10:5.58" w="121" gap="7" style="margin-left:12px"></ind-value>
        <ind-value class="p" up t="20:5.01" w="120" gap="8" style="margin-left:12px"></ind-value>
        <ind-button plain corner style="width:127px;margin-left:auto">DK点</ind-button>
        <ind-button plain style="width:133px;margin:0 15px 0 39px">前复权</ind-button>
    </ind-row>
    <k-chart kind="price"></k-chart>
    <ind-row>
        <ind-button class="latin" style="width:117px"><fit-text t="DDY" w="73"></fit-text></ind-button>
        <ind-value class="k" t="-7.108" w="96" gap="3" style="margin-left:2px"></ind-value>
        <ind-value class="y" t="DDY1:-30.075" w="204" gap="6" style="margin-left:16px"></ind-value>
        <ind-value class="m" t="DDY2:-19.709" w="204" gap="6" style="margin-left:15px"></ind-value>
        <ind-value class="g" t="DDY3:-12.882" w="204" gap="6" style="margin-left:15px"></ind-value>
        <div class="fold"><svg width="18" height="30" fill="none" stroke="#fff" stroke-width="5" stroke-linecap="round" stroke-linejoin="round"><path d="M14 3L4 15l10 12"/></svg></div>
    </ind-row>
    <k-chart kind="ddy"></k-chart>
    <ind-row class="wide">
        <ind-button style="width:188px">主力意愿</ind-button>
        <span class="hint"><fit-text t="解锁查看完整K线数据" w="375"></fit-text></span>
    </ind-row>
    <k-chart kind="force"><unlock-cover></unlock-cover></k-chart>
    <ind-row>
        <ind-button class="latin" style="width:147px"><fit-text t="MACD" w="101"></fit-text></ind-button>
        <ind-value class="k" t="DIF:0.33" w="148" gap="6" style="margin-left:2px"></ind-value>
        <ind-value class="y" up t="DEA:0.26" w="165" gap="6" style="margin-left:21px"></ind-value>
        <ind-value class="m" t="M:0.13" w="120" gap="8" style="margin-left:20px"></ind-value>
    </ind-row>
    <k-chart kind="macd"></k-chart>
    <ind-row>
        <ind-button style="width:152px">成交量</ind-button>
        <ind-value class="k" t="137.5万" w="107" gap="4" style="margin-left:4px"></ind-value>
        <ind-value class="y" t="MA1:169.3万" w="177" gap="5" style="margin-left:12px"></ind-value>
        <ind-value class="m" t="MA2:220.7万" w="177" gap="5" style="margin-left:12px"></ind-value>
        <ind-value class="g" up t="MA3:148.7万" w="177" gap="6" style="margin-left:12px"></ind-value>
    </ind-row>
    <k-chart kind="vol"></k-chart>
    <date-axis></date-axis>
    <promo-banner></promo-banner>
    <section-tabs></section-tabs>
    <card-peek></card-peek>
    <bottom-nav></bottom-nav>
`);
</script>
</body>
</html>
